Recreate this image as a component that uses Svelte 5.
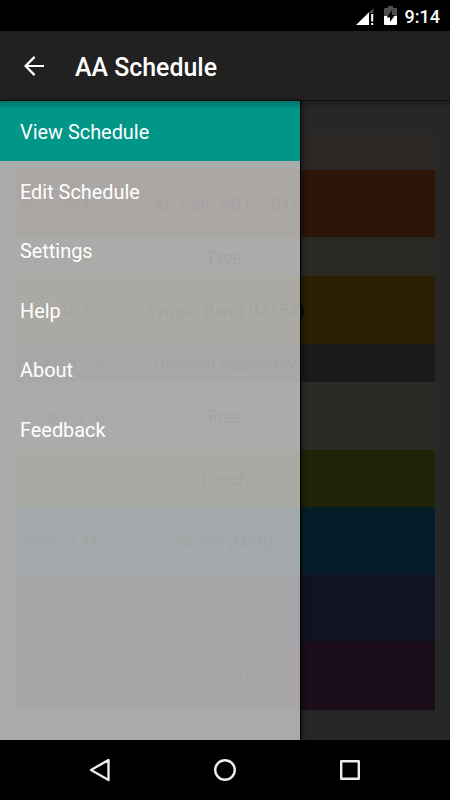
<script lang="ts">
    type Period = { time: string; name: string; color: string; height: number };

    const menu = ['View Schedule', 'Edit Schedule', 'Settings', 'Help', 'About', 'Feedback'];

    const periods: Period[] = [
        { time: '', name: '', color: '#2b2724', height: 38 },
        { time: '8:27 - 9:14', name: 'AP Calc AB (S101)', color: '#2a1507', height: 67 },
        { time: '9:21 - 9:41', name: 'Free', color: '#2a2924', height: 39 },
        { time: '9:48 - 10:35', name: 'Symph Band (M154)', color: '#292003', height: 68 },
        { time: '10:42 - 11:09', name: 'Division Assembly', color: '#1a1a1a', height: 38 },
        { time: '11:16 - 12:03', name: 'Free', color: '#2a2a25', height: 68 },
        { time: '12:10 - 12:50', name: 'Lunch', color: '#1e2405', height: 57 },
        { time: '12:57 - 1:44', name: 'Hums (M16)', color: '#061e29', height: 67.5 },
        { time: '1:51 - 2:38', name: 'AP Physics I (S212)', color: '#111320', height: 67.5 },
        { time: '2:45 - 3:32', name: 'English IV (B404)', color: '#1b0d1a', height: 68 },
    ];

    let selected = $state(0);
</script>

<div class="screen">
    <div class="status">
        <svg class="signal" width="18" height="17" viewBox="0 0 18 17">
            <path d="M17.5 0v5H13V4.5z" fill="#4d4d4d" />
            <path d="M0 17 13 4.2V17z" fill="#fff" />
            <path d="M15.2 6h2v7.5h-2zM15.2 15h2v2h-2z" fill="#fff" />
        </svg>
        <svg class="battery" width="13" height="19" viewBox="0 0 13 19">
            <path d="M4 0h5v2h3q1 0 1 1v7H0V3q0-1 1-1h3z" fill="#4d4d4d" />
            <path d="M0 10h13v8q0 1-1 1H1q-1 0-1-1z" fill="#fff" />
            <path d="M8 4.5 2.7 11.5H6V16l5-7H8z" fill="#000" />
        </svg>
        <span>9:14</span>
    </div>

    <header>
        <svg width="20" height="20" viewBox="0 0 20 20" fill="none" stroke="#fff" stroke-width="2.2">
            <path d="M20 10H2M10.6 .9 1.5 10l9.1 9.1" />
        </svg>
        <h1>AA Schedule</h1>
    </header>

    <main>
        <div class="schedule">
            {#each periods as p}
                <div class="period" style="background: {p.color}; height: {p.height}px">
                    <span class="time">{p.time}</span>
                    <span class="name">{p.name}</span>
                </div>
            {/each}
        </div>

        <nav class="drawer">
            {#each menu as item, i}
                <button class:active={i === selected} onclick={() => (selected = i)}>{item}</button>
            {/each}
        </nav>
        <div class="top-shadow"></div>
    </main>

    <footer>
        <svg width="22" height="24" viewBox="0 0 22 24"><path d="M19.5 2v20L2 12z" /></svg>
        <svg width="22" height="24" viewBox="0 0 22 24"><circle cx="11" cy="12" r="9.8" /></svg>
        <svg width="22" height="24" viewBox="0 0 22 24"><rect x="2.2" y="3.2" width="17.6" height="17.6" /></svg>
    </footer>
</div>

<style>
    :global(body) {
        margin: 0;
        background: #000;
    }

    .screen {
        width: 450px;
        height: 800px;
        display: flex;
        flex-direction: column;
        overflow: hidden;
        font-family: Roboto, sans-serif;
        color: #fff;
    }

    .status {
        height: 31px;
        box-sizing: border-box;
        display: flex;
        justify-content: flex-end;
        align-items: flex-start;
        padding: 0 10px 0 0;
        background: #000;
    }

    .signal {
        margin: 8px 10px 0 0;
    }

    .battery {
        margin: 6px 8px 0 0;
    }

    .status span {
        font-size: 18px;
        font-weight: 500;
        line-height: 33px;
    }

    header {
        height: 70px;
        box-sizing: border-box;
        display: flex;
        align-items: center;
        padding-left: 24px;
        background: #212121;
        border-bottom: 1px solid #101010;
    }

    h1 {
        margin: 4px 0 0 31px;
        font-size: 24.9px;
        font-weight: 500;
        line-height: 30px;
    }

    main {
        position: relative;
        height: 639px;
        box-sizing: border-box;
        padding: 31px 15px 0;
        background: #272727;
    }

    .period {
        display: grid;
        grid-template-columns: 100px 1fr 100px;
        align-items: center;
        box-sizing: border-box;
        padding: 2px 0 0 6px;
        color: #030303;
        white-space: nowrap;
    }

    .time {
        font-size: 14.8px;
    }

    .name {
        font-size: 17.5px;
        text-align: center;
        margin-left: -6px;
    }

    .drawer {
        position: absolute;
        top: 0;
        left: 0;
        bottom: 0;
        width: 300px;
        display: flex;
        flex-direction: column;
        background: rgba(204, 204, 204, 0.8);
        box-shadow: 1px 0 0 #000, 2px 0 5px rgba(0, 0, 0, 0.55);
    }

    .drawer button {
        height: 59.6px;
        padding: 3.4px 20px 0;
        border: 0;
        background: none;
        color: #fff;
        font: 19.9px Roboto, sans-serif;
        text-align: left;
    }

    .drawer .active {
        background: #009688;
    }

    .top-shadow {
        position: absolute;
        top: 0;
        left: 0;
        right: 0;
        height: 8px;
        background: linear-gradient(rgba(0, 0, 0, 0.24), transparent);
    }

    footer {
        height: 60px;
        display: flex;
        justify-content: center;
        align-items: center;
        gap: 103px;
        background: #000;
    }

    footer svg {
        fill: none;
        stroke: #ececec;
        stroke-width: 2.4;
        stroke-linejoin: round;
    }
</style>
